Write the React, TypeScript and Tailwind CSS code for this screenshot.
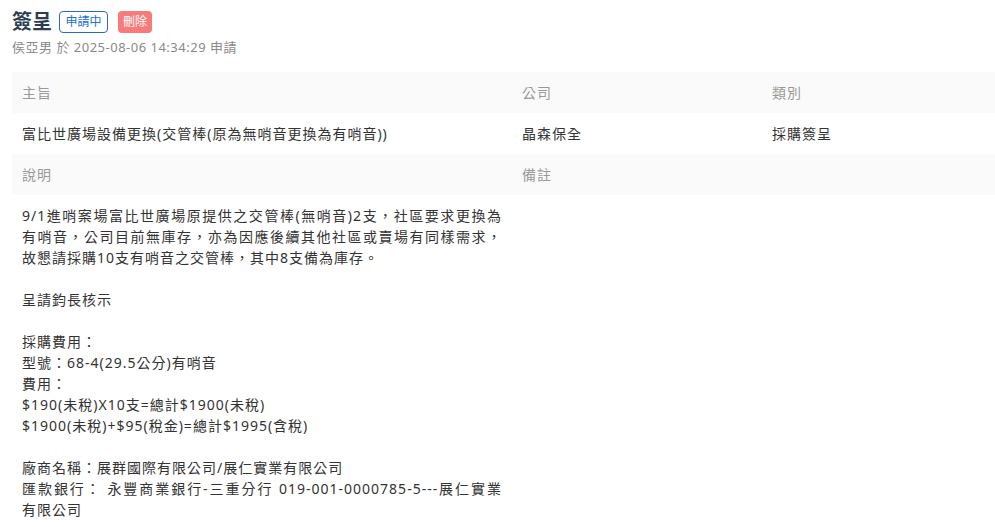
import React from "react";

type Line = { text: string; justify?: boolean };

const lines: Line[] = [
  { text: "9/1進哨案場富比世廣場原提供之交管棒(無哨音)2支，社區要求更換為", justify: true },
  { text: "有哨音，公司目前無庫存，亦為因應後續其他社區或賣場有同樣需求，", justify: true },
  { text: "故懇請採購10支有哨音之交管棒，其中8支備為庫存。" },
  { text: "" },
  { text: "呈請鈞長核示" },
  { text: "" },
  { text: "採購費用：" },
  { text: "型號：68-4(29.5公分)有哨音" },
  { text: "費用：" },
  { text: "$190(未稅)X10支=總計$1900(未稅)" },
  { text: "$1900(未稅)+$95(稅金)=總計$1995(含稅)" },
  { text: "" },
  { text: "廠商名稱：展群國際有限公司/展仁實業有限公司" },
  { text: "匯款銀行： 永豐商業銀行-三重分行 019-001-0000785-5---展仁實業", justify: true },
  { text: "有限公司" },
];

export default function App() {
  return (
    <div
      lang="zh-TW"
      className="min-h-[527px] bg-white pl-3 pt-[11px]"
      style={{ fontFamily: '"Noto Sans", "Noto Sans CJK TC", sans-serif' }}
    >
      <div className="flex items-center">
        <h1 className="text-[20px] leading-[22px] font-bold text-[#2c3e50]">簽呈</h1>
        <span className="ml-[7px] h-[22px] w-[49px] flex items-center justify-center border border-[#2a6bc4] rounded-[4px] text-[12px] leading-none text-[#1e6fd6]">申請中</span>
        <span className="ml-[10px] h-[22px] w-[34px] flex items-center justify-center rounded-[4px] bg-[#f77b7b] text-[12px] leading-none text-white">刪除</span>
      </div>
      <div className="mt-[6px] text-[13px] leading-[17px] text-[#8a8a8a] tracking-[0.5px]">侯亞男 於 2025-08-06 14:34:29 申請</div>

      <div className="mt-[16px] grid grid-cols-[500px_250px_250px] text-[14px] tracking-[1px]">
        <div className="bg-[#fafafa] h-[41px] px-[10px] flex items-center text-[#999]">主旨</div>
        <div className="bg-[#fafafa] h-[41px] px-[10px] flex items-center text-[#999]">公司</div>
        <div className="bg-[#fafafa] h-[41px] px-[10px] flex items-center text-[#999]">類別</div>

        <div className="h-[41px] px-[10px] flex items-center text-[#333]">富比世廣場設備更換(交管棒(原為無哨音更換為有哨音))</div>
        <div className="h-[41px] px-[10px] flex items-center text-[#333]">晶森保全</div>
        <div className="h-[41px] px-[10px] flex items-center text-[#333]">採購簽呈</div>

        <div className="bg-[#fafafa] h-[41px] px-[10px] flex items-center text-[#999]">說明</div>
        <div className="col-span-2 bg-[#fafafa] h-[41px] px-[10px] flex items-center text-[#999]">備註</div>

        <div className="px-[10px] py-[10px] leading-[21px] text-[#333]">
          {lines.map((l, i) => (
            <div
              key={i}
              className={
                l.justify
                  ? "h-[21px] whitespace-nowrap text-justify [text-align-last:justify]"
                  : "h-[21px] whitespace-pre"
              }
            >
              {l.text}
            </div>
          ))}
        </div>
        <div className="col-span-2 px-[10px] py-[10px]"></div>
      </div>
    </div>
  );
}
